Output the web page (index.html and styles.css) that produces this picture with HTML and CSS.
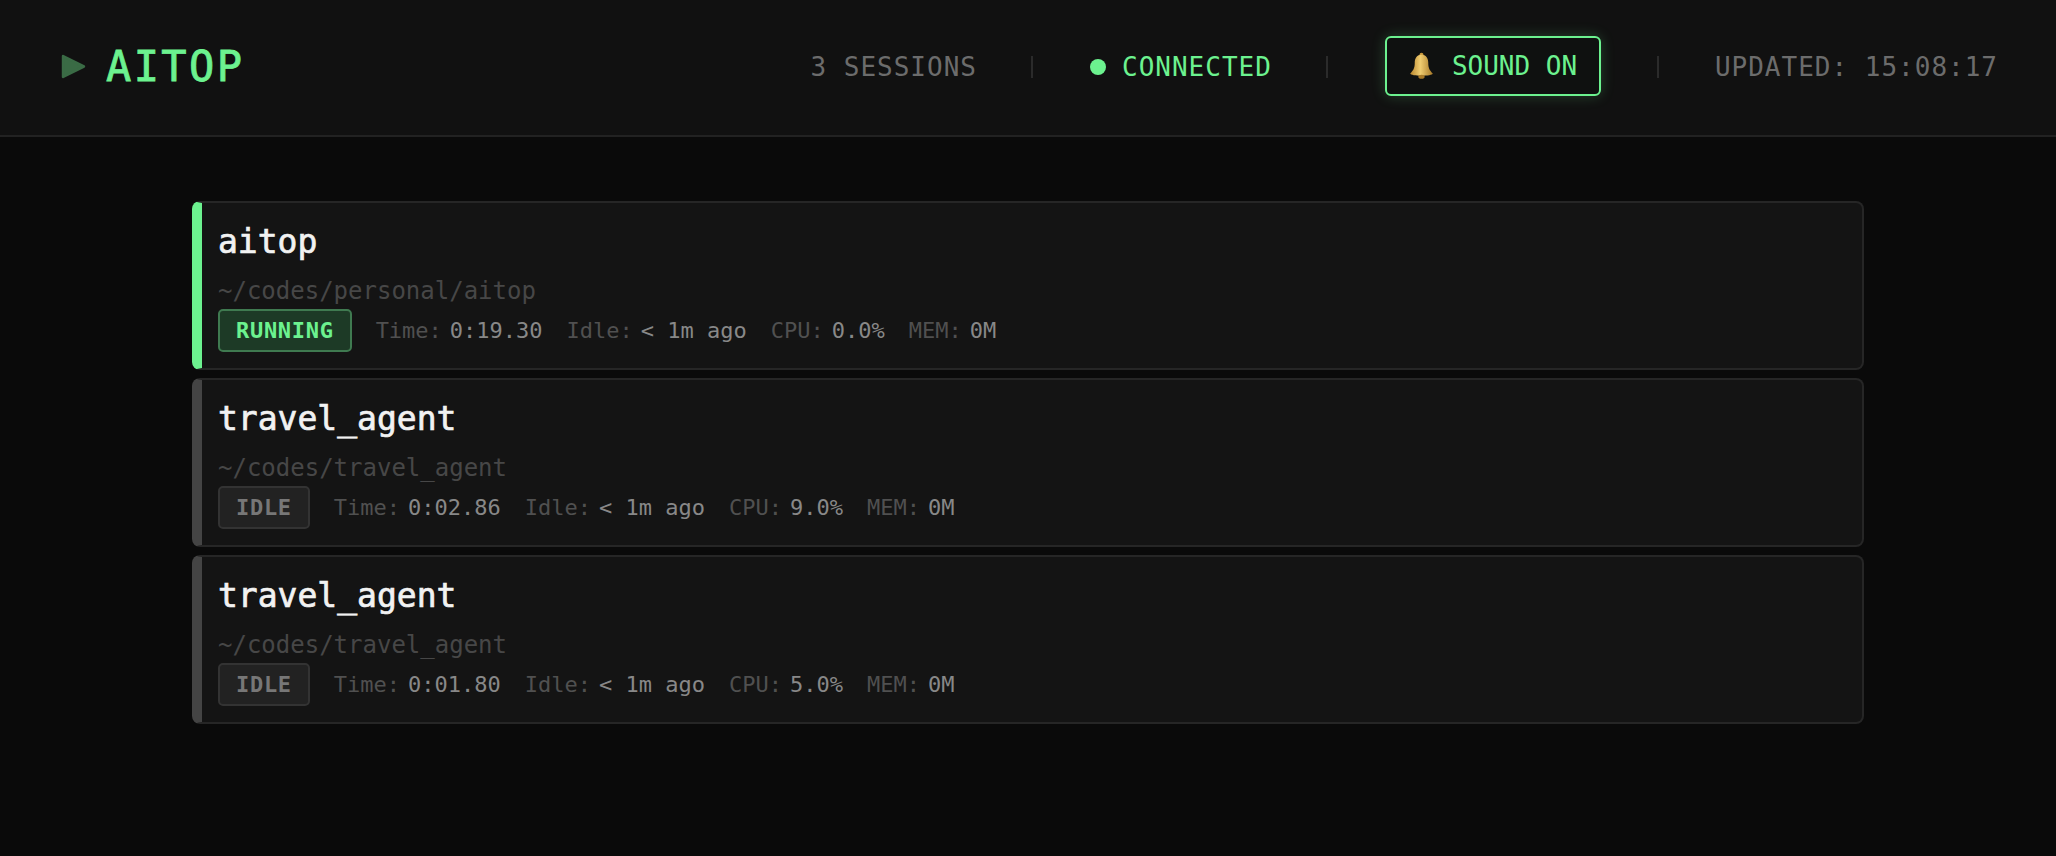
FILE: index.html
```html
<!DOCTYPE html>
<html lang="en">
<head>
<meta charset="utf-8">
<title>AITOP</title>
<link rel="stylesheet" href="styles.css">
</head>
<body>
<header class="topbar">
  <div class="brand">
    <svg class="brand-icon" viewBox="0 0 24 24" aria-hidden="true"><path d="M2 2 L22 12 L2 22 Z" fill="#3a6b45" stroke="#3a6b45" stroke-width="2.500" stroke-linejoin="round"/></svg>
    <h1 class="brand-name">AITOP</h1>
  </div>
  <div class="status">
    <span class="muted">3 SESSIONS</span>
    <span class="sep"></span>
    <span class="conn"><span class="dot"></span>CONNECTED</span>
    <span class="sep"></span>
    <button class="sound">
      <svg class="bell" viewBox="0 0 24 24" aria-hidden="true">
        <defs><linearGradient id="g" x1="0" x2="1" y1="0" y2="0"><stop offset="0" stop-color="#b8862e"/><stop offset=".45" stop-color="#f0cd70"/><stop offset="1" stop-color="#a87a28"/></linearGradient></defs>
        <circle cx="12" cy="2.5" r="1.8" fill="#c9993c"/>
        <path d="M12 2.500c-4 0-6 3-6 7 0 5-1.500 7-4 9.500 0 1.200 5 2 10 2s10-.8 10-2c-2.500-2.500-4-4.500-4-9.500 0-4-2-7-6-7z" fill="url(#g)"/>
        <ellipse cx="12" cy="22" rx="2.800" ry="1.800" fill="#a87a28"/>
      </svg>
      SOUND ON
    </button>
    <span class="sep sep-after-button"></span>
    <span class="muted">UPDATED: 15:08:17</span>
  </div>
</header>
<main class="list">
  <article class="card running">
    <h2 class="name">aitop</h2>
    <div class="path">~/codes/personal/aitop</div>
    <div class="meta">
      <span class="badge">RUNNING</span>
      <span class="stat"><span class="k">Time:</span><span class="v">0:19.30</span></span>
      <span class="stat"><span class="k">Idle:</span><span class="v">&lt; 1m ago</span></span>
      <span class="stat"><span class="k">CPU:</span><span class="v">0.0%</span></span>
      <span class="stat"><span class="k">MEM:</span><span class="v">0M</span></span>
    </div>
  </article>
  <article class="card">
    <h2 class="name">travel_agent</h2>
    <div class="path">~/codes/travel_agent</div>
    <div class="meta">
      <span class="badge">IDLE</span>
      <span class="stat"><span class="k">Time:</span><span class="v">0:02.86</span></span>
      <span class="stat"><span class="k">Idle:</span><span class="v">&lt; 1m ago</span></span>
      <span class="stat"><span class="k">CPU:</span><span class="v">9.0%</span></span>
      <span class="stat"><span class="k">MEM:</span><span class="v">0M</span></span>
    </div>
  </article>
  <article class="card">
    <h2 class="name">travel_agent</h2>
    <div class="path">~/codes/travel_agent</div>
    <div class="meta">
      <span class="badge">IDLE</span>
      <span class="stat"><span class="k">Time:</span><span class="v">0:01.80</span></span>
      <span class="stat"><span class="k">Idle:</span><span class="v">&lt; 1m ago</span></span>
      <span class="stat"><span class="k">CPU:</span><span class="v">5.0%</span></span>
      <span class="stat"><span class="k">MEM:</span><span class="v">0M</span></span>
    </div>
  </article>
</main>
</body>
</html>
```
FILE: styles.css
```css
* { box-sizing: border-box; }
html, body { margin: 0; height: 100%; }
body {
  background: #0a0a0a;
  font-family: "DejaVu Sans Mono", "Liberation Mono", monospace;
  overflow: hidden;
}
.topbar {
  height: 137px;
  background: #111;
  border-bottom: 2px solid #222;
  display: flex;
  align-items: center;
  justify-content: space-between;
  padding: 0 58px 2px 61px;
}
.brand { display: flex; align-items: center; gap: 20px; }
.brand-icon { width: 25px; height: 25px; }
.brand-name {
  margin: 0;
  font-size: 42px;
  font-weight: 400;
  letter-spacing: 2.400px;
  color: #6cf28f;
  line-height: 1;
  -webkit-text-stroke: .8px #6cf28f;
}
.status {
  display: flex;
  align-items: center;
  font-size: 26px;
  letter-spacing: 1px;
  line-height: 1;
}
.muted { color: #6c6c6c; }
.sep { width: 2px; height: 22px; background: #2b2b2b; margin: 0 57px 0 54px; }
.sep-after-button { margin: 0 56px 0 56px; }
.conn { display: flex; align-items: center; gap: 16px; color: #6cf28f; }
.dot { width: 16px; height: 16px; border-radius: 50%; background: #6cf28f; }
.sound {
  display: flex;
  align-items: center;
  gap: 17px;
  height: 60px;
  width: 216px;
  margin-bottom: 2px;
  padding: 0 0 0 21px;
  background: #0f1110;
  border: 2px solid #6cf28f;
  border-radius: 6px;
  box-shadow: 0 0 14px rgba(108, 242, 143, .22);
  color: #6cf28f;
  font: inherit;
  letter-spacing: 0;
}
.bell { width: 27px; height: 27px; }
.list {
  max-width: 1672px;
  margin: 64px auto 0;
  display: flex;
  flex-direction: column;
  gap: 8px;
}
.card {
  height: 169px;
  background: #141414;
  border: 2px solid #262626;
  border-left: 10px solid #444;
  border-radius: 8px;
  padding: 15px 16px;
}
.card.running { border-left-color: #6cf28f; }
.name {
  margin: 0;
  font-size: 33px;
  font-weight: 400;
  line-height: 48px;
  color: #f2f2f2;
  -webkit-text-stroke: .7px #f2f2f2;
}
.path {
  margin-top: 10px;
  font-size: 24px;
  line-height: 30px;
  color: #474747;
}
.meta { display: flex; align-items: center; gap: 24px; margin-top: 3px; }
.badge {
  display: flex;
  align-items: center;
  height: 43px;
  padding: 0 16px;
  font-size: 22px;
  font-weight: 700;
  letter-spacing: .7px;
  border: 2px solid #333;
  border-radius: 5px;
  background: #222;
  color: #777;
}
.running .badge {
  background: #1d3a26;
  border-color: #3f7a50;
  color: #6cf28f;
}
.stat { display: flex; gap: 8px; font-size: 22px; }
.k { color: #505050; }
.v { color: #888; }
```
